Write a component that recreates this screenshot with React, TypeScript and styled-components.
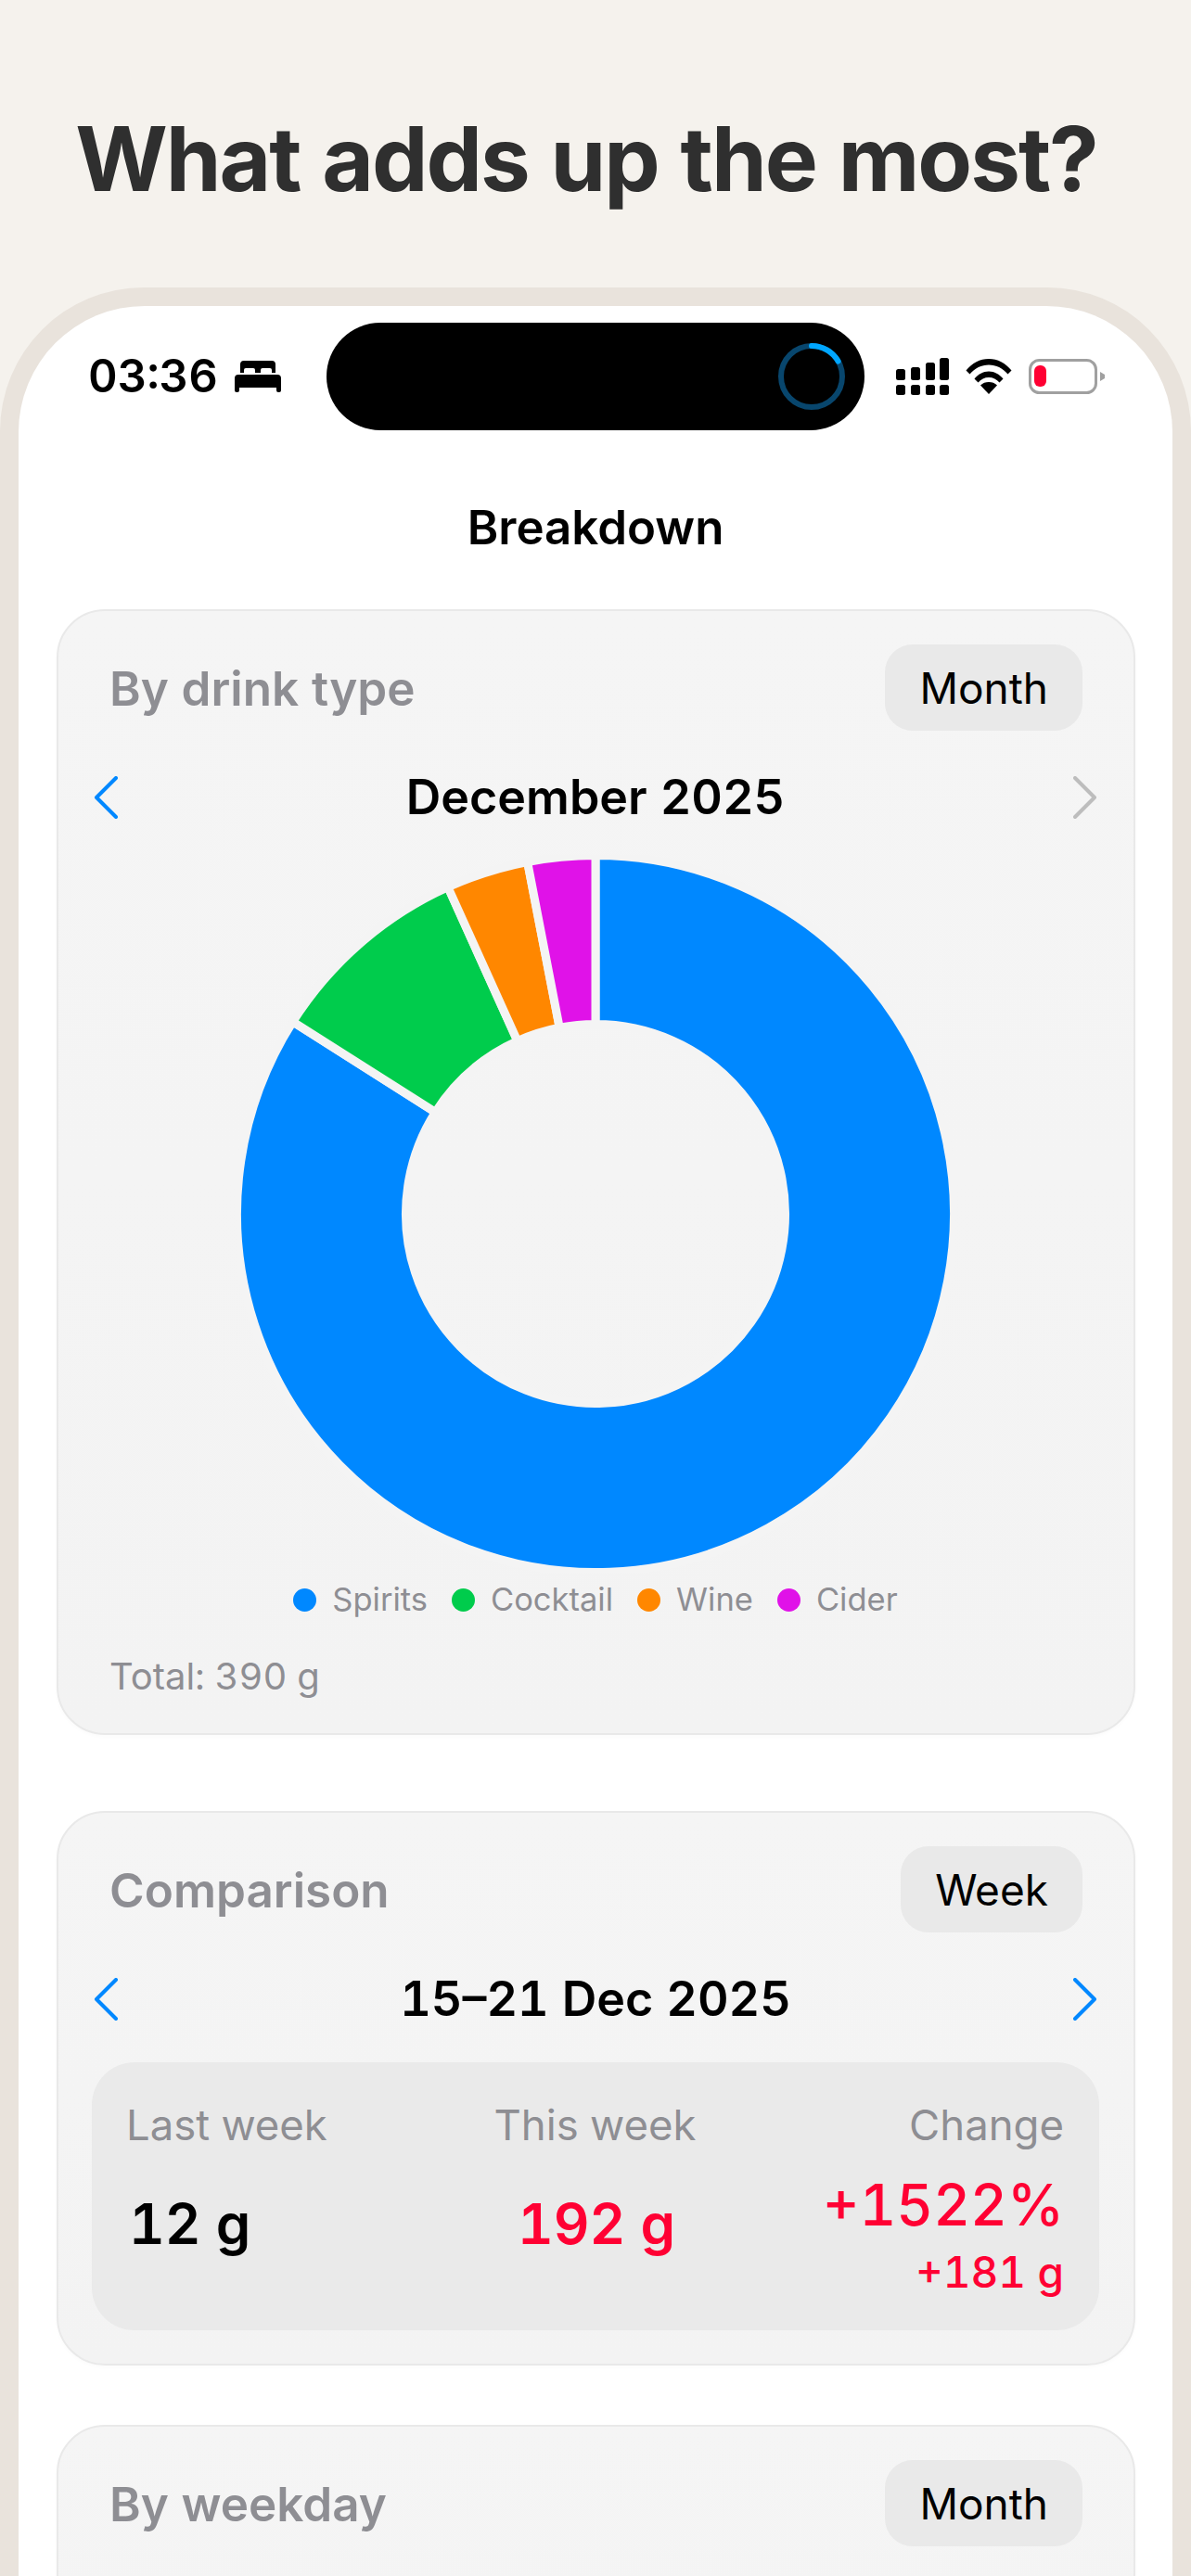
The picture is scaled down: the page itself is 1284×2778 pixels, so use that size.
import React from 'react';
import styled, { createGlobalStyle } from 'styled-components';

const GlobalStyle = createGlobalStyle`
  html, body {
    margin: 0;
    padding: 0;
    background: #f5f2ed;
  }
  * {
    box-sizing: border-box;
  }
`;

const Page = styled.div`
  width: 1284px;
  height: 2778px;
  overflow: hidden;
  background: #f5f2ed;
  font-family: Inter, "Liberation Sans", sans-serif;
  font-variant-numeric: tabular-nums;
`;

const Headline = styled.h1`
  margin: 0;
  height: 310px;
  padding: 113px 20px 0 0;
  text-align: center;
  font-size: 96px;
  line-height: 116px;
  font-weight: 700;
  letter-spacing: -2px;
  color: #2f2f2f;
`;

const PhoneFrame = styled.div`
  height: 2468px;
  padding: 20px 20px 0;
  background: #e9e3dc;
  border-radius: 155px 155px 0 0;
`;

const Screen = styled.div`
  height: 100%;
  overflow: hidden;
  background: #fff;
  border-radius: 136px 136px 0 0;
  padding-top: 18px;
`;

const StatusBar = styled.div`
  display: flex;
  align-items: center;
  height: 116px;
  padding-left: 75px;
`;

const StatusLeft = styled.div`
  display: flex;
  align-items: center;
  gap: 18px;
  width: 257px;
`;

const Clock = styled.span`
  font-size: 49px;
  line-height: 58px;
  font-weight: 600;
  color: #000;
`;

const Island = styled.div`
  display: flex;
  align-items: center;
  justify-content: flex-end;
  width: 580px;
  height: 116px;
  padding-right: 20px;
  border-radius: 58px;
  background: #000;
`;

const StatusRight = styled.div`
  display: flex;
  align-items: center;
  gap: 18px;
  margin-left: 34px;
`;

const NavTitle = styled.div`
  margin-top: 75px;
  height: 60px;
  text-align: center;
  font-size: 51px;
  line-height: 60px;
  font-weight: 600;
  color: #000;
`;

const CardStack = styled.div`
  display: flex;
  flex-direction: column;
  gap: 64px;
  margin-top: 58px;
  padding: 0 40px 0 41px;
`;

const Card = styled.section<{ $cut?: boolean }>`
  background: linear-gradient(180deg, #f5f5f5, #f3f3f3);
  border: 2px solid #e9e9e9;
  border-radius: 52px;
  padding: 36px 37px 0 36px;
  box-shadow: 0 2px 4px rgba(0, 0, 0, 0.02);
  min-height: ${p => (p.$cut ? '400px' : '0')};

  &:first-child {
    margin-bottom: 18px;
  }
`;

const CardHeader = styled.div`
  display: flex;
  align-items: center;
  justify-content: space-between;
  padding: 0 18px 0 19px;
`;

const CardTitle = styled.h2`
  margin: 0;
  font-size: 51.2px;
  line-height: 60px;
  font-weight: 600;
  color: #8e8e93;
`;

const PeriodButton = styled.button`
  height: 93px;
  padding: 0 37px;
  border: 0;
  border-radius: 30px;
  background: #e9e9e9;
  font-family: inherit;
  font-size: 46px;
  font-weight: 400;
  color: #000;
`;

const DateNav = styled.div`
  display: flex;
  align-items: center;
  justify-content: space-between;
  height: 60px;
  margin-top: 42px;
  padding: 0 2px;
`;

const DateLabel = styled.div`
  font-size: 52px;
  line-height: 60px;
  font-weight: 600;
  color: #000;
`;

const DonutWrap = styled.div`
  display: flex;
  justify-content: center;
  margin-top: 32px;
`;

const Legend = styled.div`
  display: flex;
  justify-content: center;
  gap: 26px;
  margin-top: 8px;
`;

const LegendItem = styled.div`
  display: flex;
  align-items: center;
  gap: 17px;
  font-size: 34.5px;
  line-height: 42px;
  color: #8e8e93;
`;

const LegendDot = styled.span<{ $color: string }>`
  width: 25px;
  height: 25px;
  border-radius: 50%;
  background: ${p => p.$color};
`;

const TotalLine = styled.div`
  margin-top: 38px;
  padding: 0 19px 37px;
  font-size: 40px;
  line-height: 48px;
  color: #8e8e93;
`;

const ComparePanel = styled.div`
  display: grid;
  grid-template-columns: 1fr 1fr 1fr;
  height: 289px;
  margin: 38px 0 36px;
  padding: 40px 38px 0 37px;
  border-radius: 46px;
  background: #eaeaea;
`;

const CompareColumn = styled.div<{ $align: 'left' | 'center' | 'right' }>`
  display: flex;
  flex-direction: column;
  text-align: ${p => p.$align};
`;

const CompareLabel = styled.div`
  font-size: 45.5px;
  line-height: 56px;
  color: #8e8e93;
`;

const CompareValue = styled.div<{ $red?: boolean }>`
  margin-top: 42px;
  padding-left: 3px;
  font-size: 60px;
  line-height: 72px;
  font-weight: 600;
  color: ${p => (p.$red ? '#ff0033' : '#000')};
`;

const ChangePercent = styled.div`
  margin-top: 22px;
  font-size: 61.5px;
  line-height: 72px;
  font-weight: 500;
  color: #ff0033;
`;

const ChangeGrams = styled.div`
  margin-top: 9px;
  font-size: 46px;
  line-height: 54px;
  font-weight: 500;
  color: #ff0033;
`;

const BLUE = '#0088ff';
const CARD_BG = '#f4f4f4';

const segments = [
  { name: 'Spirits', color: BLUE, from: 0, to: 302.4 },
  { name: 'Cocktail', color: '#00cc4c', from: 302.4, to: 335.7 },
  { name: 'Wine', color: '#ff8700', from: 335.7, to: 349.06 },
  { name: 'Cider', color: '#e012e8', from: 349.06, to: 360 },
];

const polar = (r: number, deg: number) => {
  const a = (deg * Math.PI) / 180;
  return `${(r * Math.sin(a)).toFixed(2)} ${(-r * Math.cos(a)).toFixed(2)}`;
};

// the stroke in the card colour eats 4.5px off every edge, that gives the gaps
const slicePath = (from: number, to: number, outer = 386.5, inner = 204.5) => {
  const large = to - from > 180 ? 1 : 0;
  return [
    `M${polar(outer, from)}`,
    `A${outer} ${outer} 0 ${large} 1 ${polar(outer, to)}`,
    `L${polar(inner, to)}`,
    `A${inner} ${inner} 0 ${large} 0 ${polar(inner, from)}`,
    'Z',
  ].join(' ');
};

const Donut = () => (
  <svg width="774" height="774" viewBox="-387 -387 774 774">
    {segments.map(s => (
      <path key={s.name} d={slicePath(s.from, s.to)} fill={s.color} stroke={CARD_BG} strokeWidth="9" />
    ))}
  </svg>
);

const Chevron = ({ dir, color }: { dir: 'left' | 'right'; color: string }) => (
  <svg width="26" height="46" viewBox="0 0 26 46" fill="none">
    <polyline
      points={dir === 'left' ? '24,2 3,23 24,44' : '2,2 23,23 2,44'}
      stroke={color}
      strokeWidth="4"
      strokeLinecap="round"
      strokeLinejoin="round"
    />
  </svg>
);

const BedIcon = () => (
  <svg width="50" height="34" viewBox="0 0 50 34" fill="#000">
    <path d="M6 13V4a4 4 0 0 1 4-4h30a4 4 0 0 1 4 4v9h-4V10a2 2 0 0 0-2-2H30a2 2 0 0 0-2 2v3h-6V10a2 2 0 0 0-2-2H12a2 2 0 0 0-2 2v3z" />
    <path d="M4 15h42a4 4 0 0 1 4 4v13a2 2 0 0 1-2 2h-1a2 2 0 0 1-2-2v-3H5v3a2 2 0 0 1-2 2H2a2 2 0 0 1-2-2V19a4 4 0 0 1 4-4z" />
  </svg>
);

const ProgressRing = () => (
  <svg width="74" height="74" viewBox="0 0 74 74" fill="none">
    <circle cx="37" cy="37" r="33" stroke="#08466d" strokeWidth="6" />
    <path d="M37 4A33 33 0 0 1 65.6 20.5" stroke="#00a6ff" strokeWidth="6" strokeLinecap="round" />
  </svg>
);

const signalBars = [
  { x: 0, y: 12, h: 12 },
  { x: 16, y: 10, h: 14 },
  { x: 32, y: 5, h: 19 },
  { x: 47, y: 0, h: 24 },
];

const SignalIcon = () => (
  <svg width="57" height="40" viewBox="0 0 57 40" fill="#000">
    {signalBars.map(b => (
      <React.Fragment key={b.x}>
        <rect x={b.x} y={b.y} width="10" height={b.h} rx="2.5" />
        <rect x={b.x} y="29" width="10" height="11" rx="2.5" />
      </React.Fragment>
    ))}
  </svg>
);

const WifiIcon = () => (
  <svg width="50" height="38" viewBox="0 0 50 38" fill="#000">
    <path d="M0.5 12.5C7 4.5 15.5 0 25 0s18 4.5 24.5 12.5l-4 4C40 10 33 6.5 25 6.5S10 10 4.5 16.5z" />
    <path d="M9.5 21.5C13.5 16.5 19 13.5 25 13.5s11.5 3 15.5 8l-4 4C33.5 22 29.5 20 25 20s-8.500 2-11.5 5.5z" />
    <path d="M25 38l-9-9.500C18.500 26 21.500 25 25 25s6.500 1 9 3.500z" />
  </svg>
);

const BatteryIcon = () => (
  <svg width="82" height="38" viewBox="0 0 82 38" fill="none">
    <rect x="1.5" y="1.5" width="71" height="35" rx="10" stroke="#a0a0a0" strokeWidth="3" />
    <rect x="6" y="7" width="13" height="23" rx="6" fill="#ff0033" />
    <path d="M77 14l5 3v4l-5 3z" fill="#a0a0a0" />
  </svg>
);

export default function App() {
  return (
    <Page>
      <GlobalStyle />
      <Headline>What adds up the most?</Headline>
      <PhoneFrame>
        <Screen>
          <StatusBar>
            <StatusLeft>
              <Clock>03:36</Clock>
              <BedIcon />
            </StatusLeft>
            <Island>
              <ProgressRing />
            </Island>
            <StatusRight>
              <SignalIcon />
              <WifiIcon />
              <BatteryIcon />
            </StatusRight>
          </StatusBar>
          <NavTitle>Breakdown</NavTitle>
          <CardStack>
            <Card>
              <CardHeader>
                <CardTitle>By drink type</CardTitle>
                <PeriodButton>Month</PeriodButton>
              </CardHeader>
              <DateNav>
                <Chevron dir="left" color={BLUE} />
                <DateLabel>December 2025</DateLabel>
                <Chevron dir="right" color="#bdbdbd" />
              </DateNav>
              <DonutWrap>
                <Donut />
              </DonutWrap>
              <Legend>
                {segments.map(s => (
                  <LegendItem key={s.name}>
                    <LegendDot $color={s.color} />
                    {s.name}
                  </LegendItem>
                ))}
              </Legend>
              <TotalLine>Total: 390 g</TotalLine>
            </Card>
            <Card>
              <CardHeader>
                <CardTitle>Comparison</CardTitle>
                <PeriodButton>Week</PeriodButton>
              </CardHeader>
              <DateNav>
                <Chevron dir="left" color={BLUE} />
                <DateLabel>15–21 Dec 2025</DateLabel>
                <Chevron dir="right" color={BLUE} />
              </DateNav>
              <ComparePanel>
                <CompareColumn $align="left">
                  <CompareLabel>Last week</CompareLabel>
                  <CompareValue>12 g</CompareValue>
                </CompareColumn>
                <CompareColumn $align="center">
                  <CompareLabel>This week</CompareLabel>
                  <CompareValue $red>192 g</CompareValue>
                </CompareColumn>
                <CompareColumn $align="right">
                  <CompareLabel>Change</CompareLabel>
                  <ChangePercent>+1522%</ChangePercent>
                  <ChangeGrams>+181 g</ChangeGrams>
                </CompareColumn>
              </ComparePanel>
            </Card>
            <Card $cut>
              <CardHeader>
                <CardTitle>By weekday</CardTitle>
                <PeriodButton>Month</PeriodButton>
              </CardHeader>
            </Card>
          </CardStack>
        </Screen>
      </PhoneFrame>
    </Page>
  );
}
